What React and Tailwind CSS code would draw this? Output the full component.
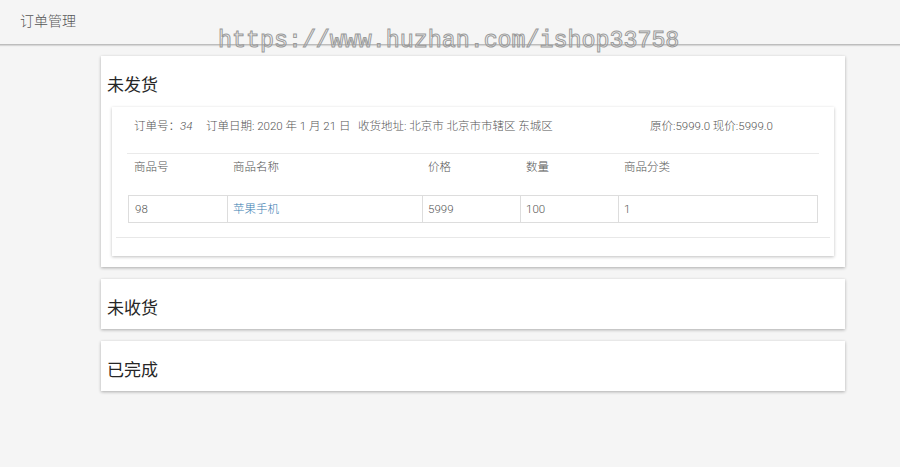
import React from "react";

const cjk = { fontFamily: 'Roboto, "Noto Sans CJK SC", sans-serif' };

function Section({ title, children }) {
  return (
    <div className="bg-white shadow-[0_1px_3px_rgba(0,0,0,0.3)]">
      <h2 className="px-[6px] pt-[19px] text-[17px] leading-[20px] text-[#262626]">{title}</h2>
      {children ? children : <div className="h-[11px]" />}
    </div>
  );
}

const cols = [
  { key: "id", label: "商品号", w: "w-[99px]" },
  { key: "name", label: "商品名称", w: "w-[195px]" },
  { key: "price", label: "价格", w: "w-[98px]" },
  { key: "qty", label: "数量", w: "w-[98px]" },
  { key: "cat", label: "商品分类", w: "flex-1" },
];

const items = [{ id: 98, name: "苹果手机", price: 5999, qty: 100, cat: 1 }];

export default function App() {
  return (
    <div className="relative min-h-[467px] bg-[#f5f5f5] text-[#444]" style={cjk}>
      {/* header */}
      <div className="h-[45px] border-b border-[#bdbdbd] shadow-[0_1px_1px_rgba(0,0,0,0.12)] px-5 pt-[13px] text-[14px] leading-[16px] font-light text-[#555]">
        订单管理
      </div>

      {/* watermark */}
      <div
        className="absolute left-[218px] top-[27px] text-[23.3px] leading-[28px] text-transparent [-webkit-text-stroke:1px_#9a9a9a] pointer-events-none"
        style={{ fontFamily: '"Liberation Mono", monospace' }}
      >
        https://www.huzhan.com/ishop33758
      </div>

      <div className="ml-[101px] w-[744px] pt-[11px] flex flex-col gap-[12px]">
        <Section title="未发货">
          <div className="mx-[11px] mt-[12px] mb-[11px] bg-white shadow-[0_1px_3px_rgba(0,0,0,0.25)] pb-[18px]">
            <div className="pt-[11px] pl-[22px] flex whitespace-nowrap text-[11.5px] leading-[16px] font-light text-[#555]">
              <span className="w-[72px] shrink-0">
                订单号：<i>34</i>
              </span>
              <span className="w-[152px] shrink-0">订单日期: 2020 年 1 月 21 日</span>
              <span className="w-[292px] shrink-0">收货地址: 北京市 北京市市辖区 东城区</span>
              <span>原价:5999.0 现价:5999.0</span>
            </div>
            <div className="mx-[15px] mt-[19px] border-t border-[#eaeaea]" />
            <div className="ml-[16px] mr-[16px]">
              <div className="flex h-[41px] pt-[5px] text-[11.5px] leading-[16px] font-light text-[#555]">
                {cols.map((c) => (
                  <div key={c.key} className={`${c.w} pl-[6px]`}>
                    {c.label}
                  </div>
                ))}
              </div>
              {items.map((it) => (
                <div key={it.id} className="flex h-[28px] border border-[#ddd] text-[11.5px] leading-[16px] font-light text-[#555]">
                  <div className="w-[99px] pl-[6px] flex items-center border-r border-[#ddd]">{it.id}</div>
                  <div className="w-[195px] pl-[5px] flex items-center border-r border-[#ddd] text-[#3a7cb0]">{it.name}</div>
                  <div className="w-[98px] pl-[5px] flex items-center border-r border-[#ddd]">{it.price}</div>
                  <div className="w-[98px] pl-[5px] flex items-center border-r border-[#ddd]">{it.qty}</div>
                  <div className="flex-1 pl-[5px] flex items-center">{it.cat}</div>
                </div>
              ))}
            </div>
            <div className="mx-[4px] mt-[14px] border-t border-[#e8e8e8]" />
          </div>
        </Section>
        <Section title="未收货" />
        <Section title="已完成" />
      </div>
    </div>
  );
}
